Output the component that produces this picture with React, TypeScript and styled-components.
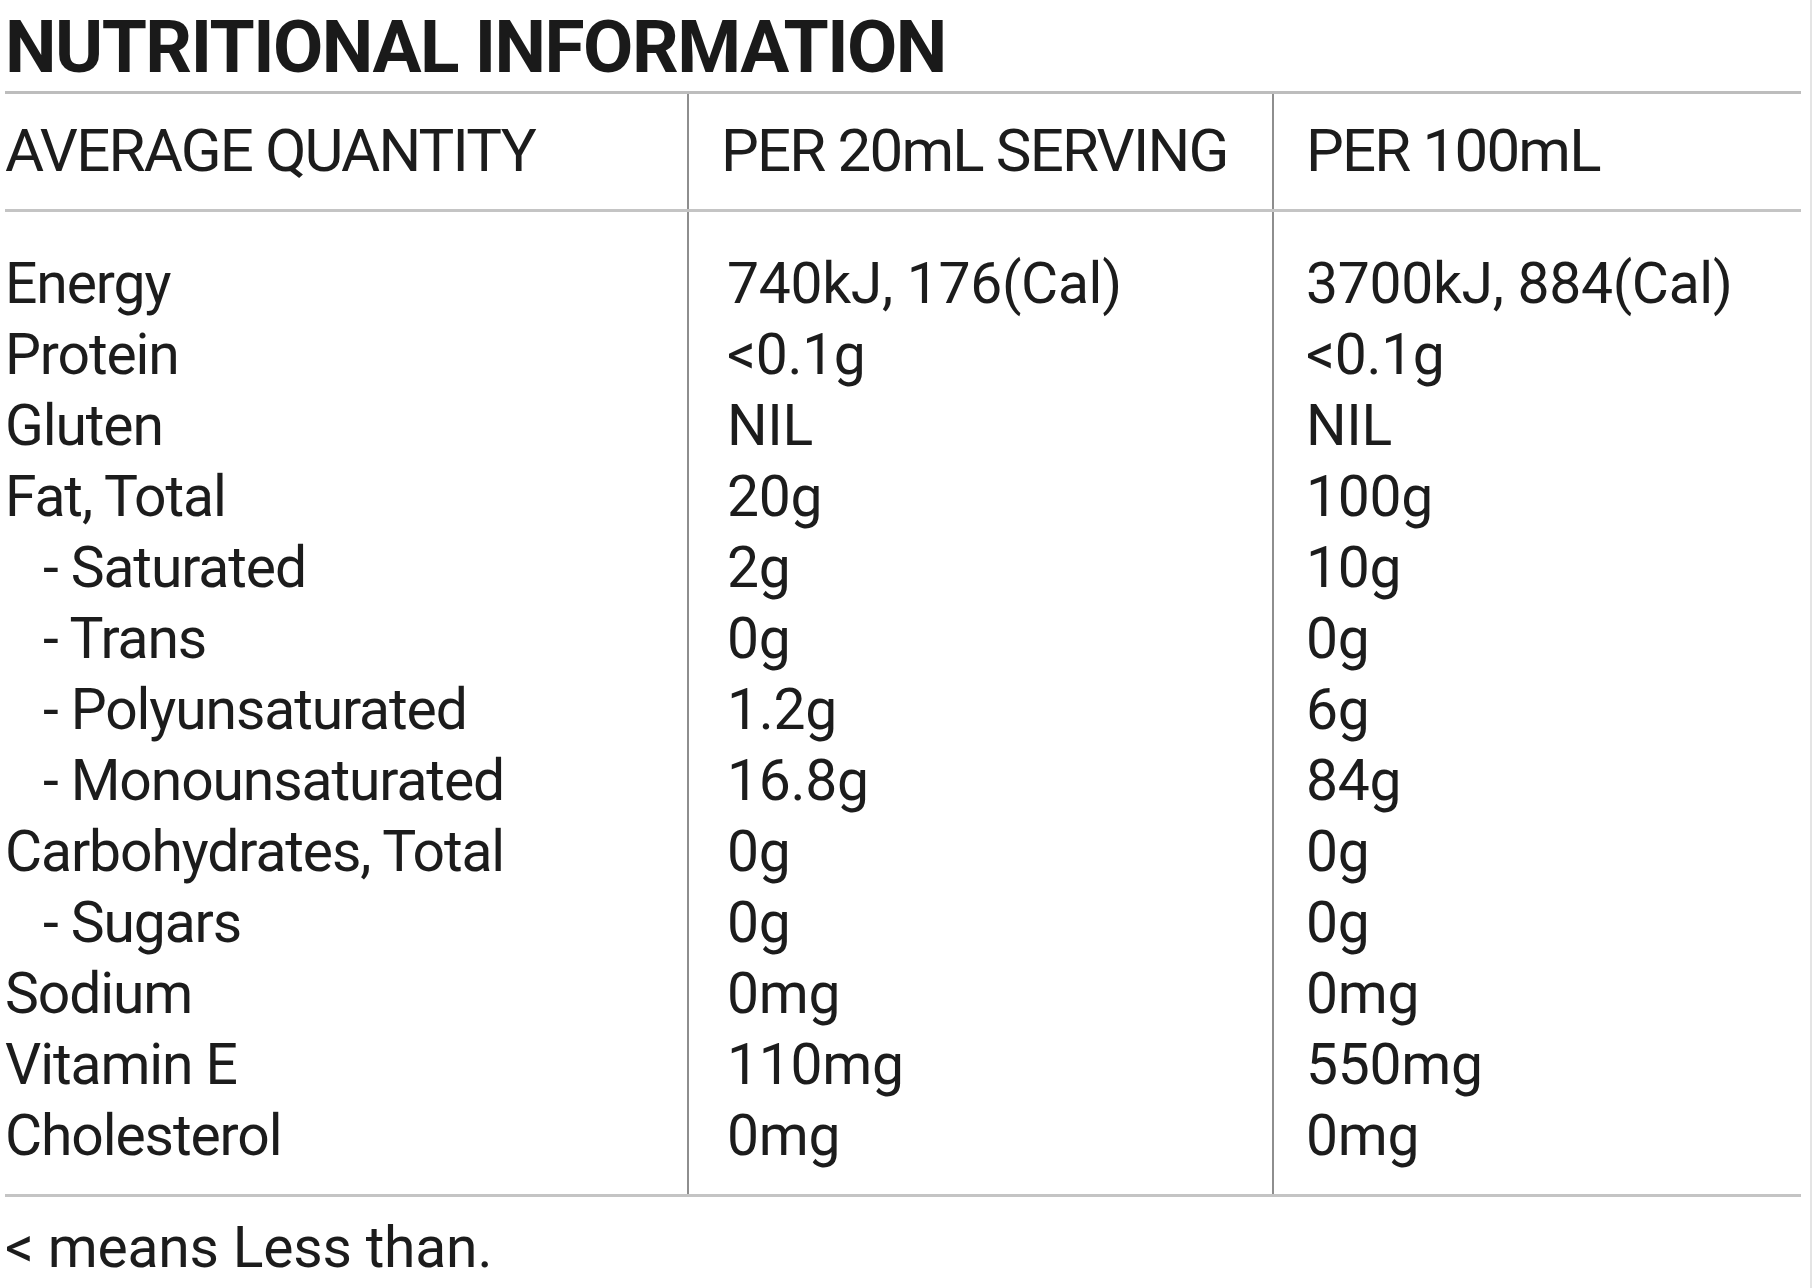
import React from "react";
import styled, { createGlobalStyle } from "styled-components";

const GlobalStyle = createGlobalStyle`
  html, body {
    margin: 0;
    padding: 0;
    background: #ffffff;
  }
  body {
    font-family: Roboto, "Liberation Sans", sans-serif;
    color: #1c1c1c;
  }
`;

const Page = styled.div`
  width: 1812px;
  height: 1288px;
  box-sizing: border-box;
  border-right: 2px solid #e4e4e4;
  overflow: hidden;
  padding: 0 9px 0 5px;
`;

const Title = styled.h2`
  margin: 0;
  padding-top: 5px;
  height: 91px;
  box-sizing: border-box;
  font-size: 73px;
  font-weight: 700;
  line-height: 84px;
  letter-spacing: -1.5px;
  color: #1a1a1a;
`;

const Table = styled.table`
  width: 100%;
  border-collapse: collapse;
  border-top: 3px solid #bdbdbd;
  border-bottom: 3px solid #c4c4c4;
`;

const HeadCell = styled.th<{ $pad: number; $line?: boolean }>`
  text-align: left;
  font-weight: 400;
  font-size: 60px;
  letter-spacing: -1.8px;
  height: 113px;
  padding: 0 0 2px ${(p) => p.$pad}px;
  border-bottom: 3px solid #c4c4c4;
  border-left: ${(p) => (p.$line ? "2px solid #8e8e8e" : "none")};
  color: #1c1c1c;
  vertical-align: middle;
`;

const Cell = styled.td<{ $pad: number; $line?: boolean; $indent?: boolean; $tight?: boolean }>`
  font-size: 57px;
  line-height: 71px;
  letter-spacing: ${(p) => (p.$tight ? "-1.1px" : "-0.3px")};
  padding: 0 0 0 ${(p) => p.$pad + (p.$indent ? 38 : 0)}px;
  border-left: ${(p) => (p.$line ? "2px solid #8e8e8e" : "none")};
  white-space: nowrap;
  vertical-align: top;
`;

const SpacerCell = styled.td<{ $line?: boolean; $h: number }>`
  height: ${(p) => p.$h}px;
  padding: 0;
  border-left: ${(p) => (p.$line ? "2px solid #8e8e8e" : "none")};
`;

const Note = styled.p`
  margin: 0;
  padding-top: 18px;
  font-size: 57px;
  line-height: 66px;
  letter-spacing: -0.2px;
`;

type Row = { name: string; serving: string; per100: string; indent?: boolean };

const ROWS: Row[] = [
  { name: "Energy", serving: "740kJ, 176(Cal)", per100: "3700kJ, 884(Cal)" },
  { name: "Protein", serving: "<0.1g", per100: "<0.1g" },
  { name: "Gluten", serving: "NIL", per100: "NIL" },
  { name: "Fat, Total", serving: "20g", per100: "100g" },
  { name: "- Saturated", serving: "2g", per100: "10g", indent: true },
  { name: "- Trans", serving: "0g", per100: "0g", indent: true },
  { name: "- Polyunsaturated", serving: "1.2g", per100: "6g", indent: true },
  { name: "- Monounsaturated", serving: "16.8g", per100: "84g", indent: true },
  { name: "Carbohydrates, Total", serving: "0g", per100: "0g" },
  { name: "- Sugars", serving: "0g", per100: "0g", indent: true },
  { name: "Sodium", serving: "0mg", per100: "0mg" },
  { name: "Vitamin E", serving: "110mg", per100: "550mg" },
  { name: "Cholesterol", serving: "0mg", per100: "0mg" },
];

const App = () => {
  return (
    <Page>
      <GlobalStyle />
      <Title>NUTRITIONAL INFORMATION</Title>
      <Table>
        <colgroup>
          <col style={{ width: 683 }} />
          <col style={{ width: 585 }} />
          <col />
        </colgroup>
        <thead>
          <tr>
            <HeadCell $pad={0}>AVERAGE QUANTITY</HeadCell>
            <HeadCell $pad={32} $line>
              PER 20mL SERVING
            </HeadCell>
            <HeadCell $pad={32} $line>
              PER 100mL
            </HeadCell>
          </tr>
        </thead>
        <tbody>
          <tr>
            <SpacerCell $h={36} />
            <SpacerCell $h={36} $line />
            <SpacerCell $h={36} $line />
          </tr>
          {ROWS.map((row) => (
            <tr key={row.name}>
              <Cell $pad={0} $indent={row.indent} $tight>
                {row.name}
              </Cell>
              <Cell $pad={38} $line>
                {row.serving}
              </Cell>
              <Cell $pad={32} $line>
                {row.per100}
              </Cell>
            </tr>
          ))}
          <tr>
            <SpacerCell $h={23} />
            <SpacerCell $h={23} $line />
            <SpacerCell $h={23} $line />
          </tr>
        </tbody>
      </Table>
      <Note>&lt; means Less than.</Note>
    </Page>
  );
};

export default App;
